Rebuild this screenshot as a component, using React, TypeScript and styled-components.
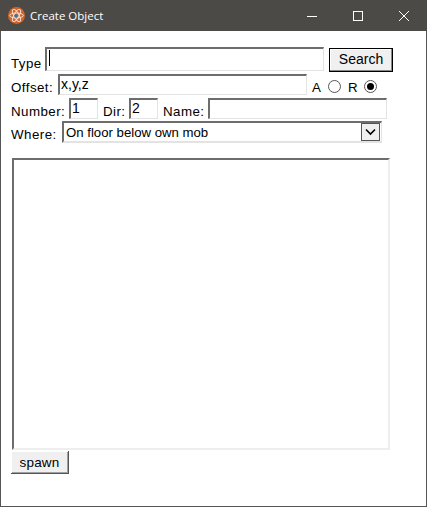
import React from "react";
import styled, { createGlobalStyle } from "styled-components";

const Global = createGlobalStyle`
  html, body { margin: 0; padding: 0; background: #fff; }
  body { font-family: "Liberation Sans", Arial, sans-serif; font-size: 13.33px; color: #000; }
`;

const Win = styled.div`
  box-sizing: border-box;
  width: 427px;
  height: 507px;
  border: 1px solid #555;
  border-top: none;
  background: #fff;
  display: flex;
  flex-direction: column;
`;

const TitleBar = styled.div`
  height: 31px;
  margin: 0 -1px;
  background: #4b4a46;
  display: flex;
  align-items: center;
  color: #fff;
  font-family: "Open Sans", "Noto Sans", sans-serif;
  font-size: 11.5px;
  padding-left: 8px;
`;

const Title = styled.span`
  margin-left: 5px;
  flex: 1;
`;

const WinButton = styled.div`
  width: 46px;
  height: 31px;
  display: flex;
  align-items: center;
  justify-content: center;
`;

const Body = styled.div`
  padding: 16px 0 0 10px;
  display: flex;
  flex-direction: column;
`;

const Row = styled.div<{ $h: number; $gap?: number }>`
  display: flex;
  align-items: flex-end;
  height: ${(p) => p.$h}px;
  margin-top: ${(p) => p.$gap ?? 0}px;
`;

const Label = styled.span<{ $w: number; $l?: number; $r?: number; $b?: number }>`
  width: ${(p) => p.$w}px;
  margin-left: ${(p) => p.$l ?? 0}px;
  margin-right: ${(p) => p.$r ?? 0}px;
  margin-bottom: ${(p) => p.$b ?? 0}px;
  line-height: 15px;
  white-space: nowrap;
  letter-spacing: 0.45px;
`;

const Field = styled.div<{ $w: number; $h: number; $mb?: number }>`
  box-sizing: border-box;
  width: ${(p) => p.$w}px;
  height: ${(p) => p.$h}px;
  margin-bottom: ${(p) => p.$mb ?? 0}px;
  border: 1px solid #e3e3e3;
  border-top: 2px solid #6d6d6d;
  border-left: 2px solid #6d6d6d;
  padding-left: 1px;
  font-size: 14px;
  line-height: 17px;
  overflow: hidden;
  white-space: nowrap;
`;

const Caret = styled.div`
  width: 1px;
  height: 16px;
  margin: 1px 0 0 1px;
  background: #000;
`;

const SearchButton = styled.div`
  box-sizing: border-box;
  width: 64px;
  height: 24px;
  margin-left: 5px;
  border: 1px solid #000;
  background: #f0f0f0;
  box-shadow: inset -1px -1px 0 #888, inset 1px 1px 0 #fff;
  font-size: 14px;
  line-height: 21px;
  text-align: center;
`;

const Radio = styled.div<{ $on?: boolean; $l: number }>`
  box-sizing: border-box;
  width: 13px;
  height: 13px;
  margin: 0 0 2px ${(p) => p.$l}px;
  border-radius: 50%;
  border: 1px solid #555;
  display: flex;
  align-items: center;
  justify-content: center;
  &::after {
    content: "";
    display: ${(p) => (p.$on ? "block" : "none")};
    width: 7px;
    height: 7px;
    border-radius: 50%;
    background: #000;
  }
`;

const Select = styled.div`
  box-sizing: border-box;
  width: 320px;
  height: 22px;
  margin-left: 4px;
  border-top: 2px solid #6d6d6d;
  border-left: 2px solid #6d6d6d;
  border-right: 1px solid #e3e3e3;
  border-bottom: 2px solid #e3e3e3;
  display: flex;
  align-items: center;
  justify-content: space-between;
  padding-left: 2px;
  font-size: 13.2px;
  line-height: 15px;
`;

const SelectArrow = styled.div`
  box-sizing: border-box;
  width: 19px;
  height: 18px;
  margin-right: 1px;
  background: #f0f0f0;
  border: 1px solid #555;
  display: flex;
  align-items: center;
  justify-content: center;
`;

const ListArea = styled.div`
  box-sizing: border-box;
  width: 378px;
  height: 292px;
  margin: 15px 0 0 1px;
  border-top: 2px solid #6d6d6d;
  border-left: 2px solid #6d6d6d;
  border-right: 2px solid #eee;
  border-bottom: 2px solid #eee;
`;

const SpawnButton = styled.div`
  box-sizing: border-box;
  width: 58px;
  height: 23px;
  margin-top: 1px;
  background: #f0f0f0;
  border-right: 1px solid #555;
  border-bottom: 1px solid #555;
  box-shadow: inset 1px 1px 0 #fff, inset -1px -1px 0 #a0a0a0;
  font-size: 13.5px;
  line-height: 23px;
  letter-spacing: 0.2px;
  text-align: center;
`;

export default function App() {
  return (
    <Win>
      <Global />
      <TitleBar>
        <svg width="17" height="17" viewBox="0 0 15 15">
          <circle cx="7.5" cy="7.5" r="7.5" fill="#d0652c" />
          <g fill="none" stroke="#f6e6da" strokeWidth="0.8">
            <ellipse cx="7.5" cy="7.5" rx="6" ry="2.2" transform="rotate(60 7.5 7.5)" />
            <ellipse cx="7.5" cy="7.5" rx="6" ry="2.2" transform="rotate(-60 7.5 7.5)" />
            <ellipse cx="7.5" cy="7.5" rx="6" ry="2.2" />
          </g>
          <circle cx="7" cy="8" r="1.5" fill="#3c6fb0" />
        </svg>
        <Title>Create Object</Title>
        <WinButton>
          <svg width="12" height="12" viewBox="0 0 12 12">
            <path d="M1 6.5h10" stroke="#fff" strokeWidth="1" />
          </svg>
        </WinButton>
        <WinButton>
          <svg width="12" height="12" viewBox="0 0 12 12">
            <rect x="1.5" y="1.5" width="9" height="9" fill="none" stroke="#fff" strokeWidth="1" />
          </svg>
        </WinButton>
        <WinButton>
          <svg width="12" height="12" viewBox="0 0 12 12">
            <path d="M1 1l10 10M11 1L1 11" stroke="#fff" strokeWidth="1" />
          </svg>
        </WinButton>
      </TitleBar>
      <Body>
        <Row $h={25}>
          <Label $w={30} $r={4} $b={1}>Type</Label>
          <Field $w={279} $h={24} $mb={1}><Caret /></Field>
          <SearchButton>Search</SearchButton>
        </Row>
        <Row $h={21} $gap={2}>
          <Label $w={43} $r={4}>Offset:</Label>
          <Field $w={249} $h={21}>x,y,z</Field>
          <Label $w={9} $l={5}>A</Label>
          <Radio $l={7} />
          <Label $w={10} $l={7}>R</Label>
          <Radio $l={6} $on />
        </Row>
        <Row $h={21} $gap={3}>
          <Label $w={54} $r={4}>Number:</Label>
          <Field $w={29} $h={21}>1</Field>
          <Label $w={22} $l={5} $r={4}>Dir:</Label>
          <Field $w={29} $h={21}>2</Field>
          <Label $w={41} $l={5} $r={4}>Name:</Label>
          <Field $w={179} $h={21} />
        </Row>
        <Row $h={22} $gap={2}>
          <Label $w={47} $b={1}>Where:</Label>
          <Select>
            On floor below own mob
            <SelectArrow>
              <svg width="11" height="8" viewBox="0 0 11 8">
                <path d="M1 1.5l4.5 4.5 4.5-4.5" fill="none" stroke="#000" strokeWidth="1.6" />
              </svg>
            </SelectArrow>
          </Select>
        </Row>
        <ListArea />
        <SpawnButton>spawn</SpawnButton>
      </Body>
    </Win>
  );
}
